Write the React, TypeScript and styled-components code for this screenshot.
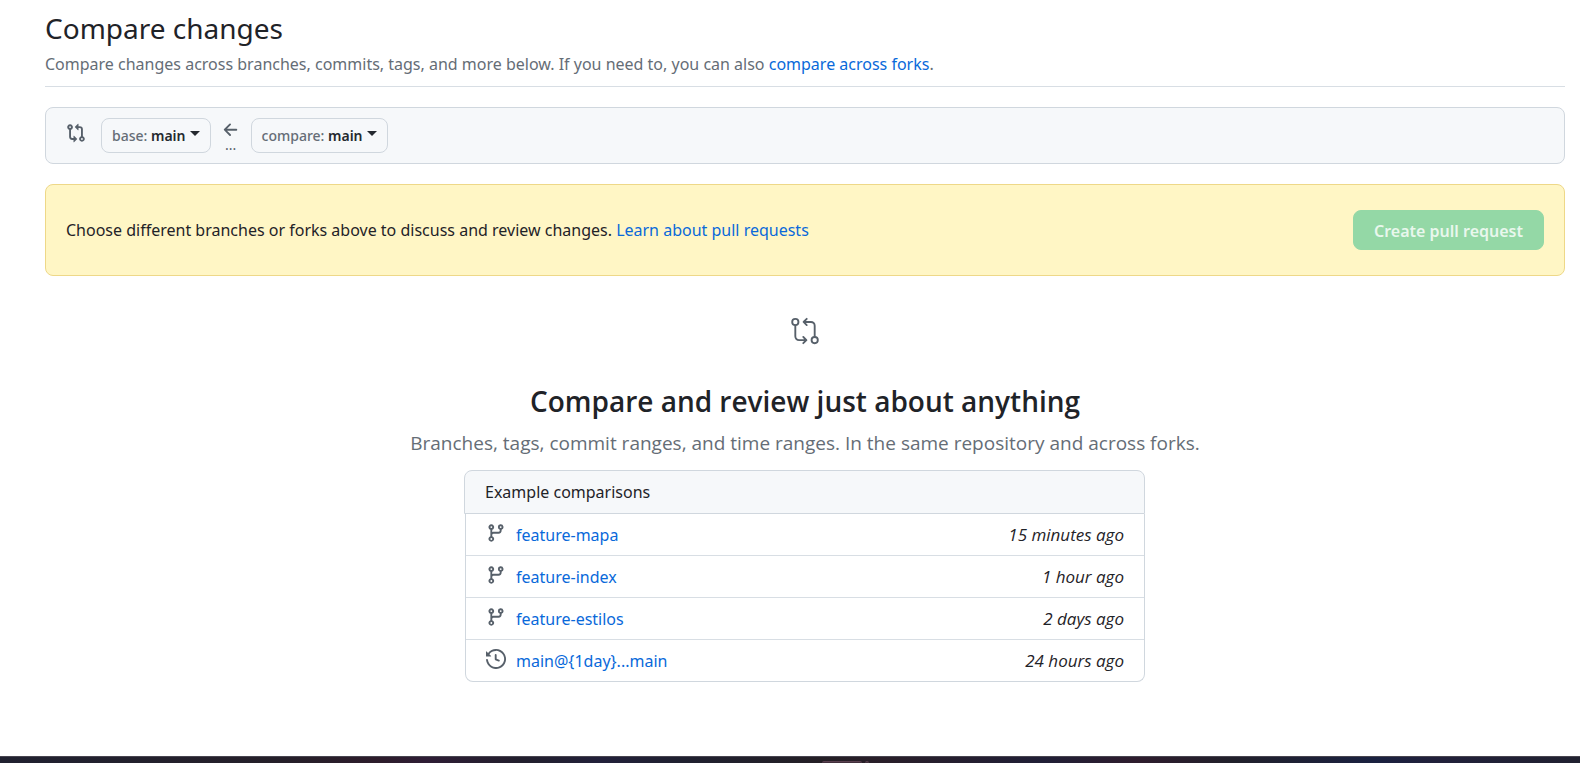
import React from "react";
import styled, { createGlobalStyle } from "styled-components";
import { GoGitCompare } from "react-icons/go";

const GlobalStyle = createGlobalStyle`
  *, *::before, *::after { box-sizing: border-box; }
  body {
    margin: 0;
    background: #ffffff;
    color: #1f2328;
    font-family: "Noto Sans", "Open Sans", sans-serif;
    font-size: 16px;
    line-height: 26px;
  }
  h1, h2, h3, p, ul { margin: 0; padding: 0; font-weight: 400; }
`;

const Page = styled.div`
  display: flex;
  flex-direction: column;
  min-height: 100vh;
`;

const Content = styled.main`
  flex: 1;
  padding: 8px 15px 0 45px;
`;

const Subhead = styled.header`
  padding-bottom: 9px;
  border-bottom: 1px solid #d8dee4;
`;

const Title = styled.h1`
  font-size: 28px;
  line-height: 40px;
`;

const Description = styled.p`
  margin-top: 3px;
  color: #656d76;
`;

const Link = styled.a`
  color: #0969da;
  text-decoration: none;
  &:hover { text-decoration: underline; }
`;

const RangeEditor = styled.div`
  display: flex;
  align-items: center;
  margin-top: 20px;
  padding: 10px 20px;
  border: 1px solid #d0d7de;
  border-radius: 8px;
  background: #f6f8fa;
`;

const Icon = styled.svg`
  display: block;
  flex: none;
  width: 20px;
  height: 20px;
  fill: #57606a;
`;

const RangeIcon = styled.span`
  margin-right: 15px;
  padding-bottom: 5px;
`;

const RefButton = styled.button`
  display: flex;
  align-items: center;
  height: 35px;
  padding: 0 10px;
  border: 1px solid #d0d7de;
  border-radius: 8px;
  background: #f6f8fa;
  color: #24292f;
  font: 600 14px/20px "Noto Sans", "Open Sans", sans-serif;
  white-space: pre;
`;

const RefLabel = styled.span`
  color: #656d76;
  font-weight: 500;
`;

const Caret = styled.span`
  margin: -4px 0 0 4px;
  border: 5px solid transparent;
  border-top-color: currentColor;
  border-bottom: 0;
`;

const Direction = styled.span`
  display: flex;
  flex-direction: column;
  align-items: center;
  width: 40px;
  padding-bottom: 2px;
  color: #57606a;
  font-size: 14px;
  line-height: 10px;
`;

const Banner = styled.section`
  display: flex;
  align-items: center;
  justify-content: space-between;
  gap: 20px;
  margin-top: 20px;
  padding: 25px 20px;
  border: 1px solid #eed888;
  border-radius: 8px;
  background: #fff6c5;
`;

const CreateButton = styled.button`
  height: 40px;
  padding: 1px 20px 0;
  border: 1px solid #94d8a6;
  border-radius: 8px;
  background: #94d8a6;
  color: #e9f7ed;
  font: 600 16px/26px "Noto Sans", "Open Sans", sans-serif;
`;

const Blankslate = styled.section`
  display: flex;
  flex-direction: column;
  align-items: center;
  padding: 40px 20px 70px;
  text-align: center;
`;

const BlankslateIcon = styled(GoGitCompare)`
  display: block;
  width: 30px;
  height: 30px;
  color: #57606a;
`;

const BlankslateTitle = styled.h2`
  margin-top: 35px;
  font-family: "Open Sans", "Noto Sans", sans-serif;
  font-size: 28px;
  font-weight: 600;
  line-height: 40px;
`;

const BlankslateText = styled.p`
  margin-top: 7px;
  color: #656d76;
  font-family: "Open Sans", "Noto Sans", sans-serif;
  font-size: 19px;
  line-height: 30px;
`;

const Box = styled.div`
  width: 100%;
  max-width: 680px;
  margin-top: 12px;
  text-align: left;
`;

const BoxHeader = styled.h3`
  margin-left: -1px;
  padding: 8px 20px;
  border: 1px solid #d0d7de;
  border-radius: 8px 8px 0 0;
  background: #f6f8fa;
  font-size: 16px;
  line-height: 26px;
`;

const List = styled.ul`
  list-style: none;
  border: 1px solid #d0d7de;
  border-top: 0;
  border-radius: 0 0 8px 8px;
`;

const Row = styled.li`
  display: flex;
  align-items: center;
  box-sizing: content-box;
  height: 40px;
  padding: 1px 20px 0;
  & + & { border-top: 1px solid #d8dee4; }
  ${Icon} { margin: 0 10px 4px 0; }
`;

const Age = styled.time`
  margin-left: auto;
  font-family: "Open Sans", "Noto Sans", sans-serif;
  font-size: 17px;
  font-style: italic;
`;

const Taskbar = styled.footer`
  display: flex;
  justify-content: center;
  align-items: flex-end;
  gap: 3px;
  height: 7px;
  padding-left: 110px;
  border-top: 1px solid #47444f;
  background: linear-gradient(90deg, #202130 0%, #251f29 18%, #2d1c2b 24%, #2e1d35 27%, #221f2d 33%, #22203a 38%, #1f2030 43%, #241f25 52%, #291e29 56%, #201f36 66%, #2e1c2d 72%, #21202b 78%, #1a2140 87%, #21203a 91%, #202130 100%);
`;

const TaskbarTab = styled.span<{ $width: number }>`
  width: ${(p) => p.$width}px;
  height: 2px;
  border-top: 1px solid #59404f;
  border-radius: 3px 3px 0 0;
  background: #42303c;
`;

const paths = {
  compare:
    "M9.573.677A.25.25 0 0 1 10 .854V2.5h1A2.5 2.5 0 0 1 13.5 5v5.628a2.251 2.251 0 1 1-1.5 0V5a1 1 0 0 0-1-1h-1v1.646a.25.25 0 0 1-.427.177L7.177 3.427a.25.25 0 0 1 0-.354ZM6 12v-1.646a.25.25 0 0 1 .427-.177l2.396 2.396a.25.25 0 0 1 0 .354l-2.396 2.396A.25.25 0 0 1 6 15.146V13.5H5A2.5 2.5 0 0 1 2.5 11V5.372a2.25 2.25 0 1 1 1.5 0V11a1 1 0 0 0 1 1Zm6.75 0a.75.75 0 1 0 0 1.5.75.75 0 0 0 0-1.5ZM4 3.25a.75.75 0 1 0-1.5 0 .75.75 0 0 0 1.5 0Z",
  branch:
    "M9.5 3.25a2.25 2.25 0 1 1 3 2.122V6A2.5 2.5 0 0 1 10 8.5H6a1 1 0 0 0-1 1v1.128a2.251 2.251 0 1 1-1.5 0V5.372a2.25 2.25 0 1 1 1.5 0v1.836A2.493 2.493 0 0 1 6 7h4a1 1 0 0 0 1-1v-.628A2.25 2.25 0 0 1 9.5 3.25Zm-6 0a.75.75 0 1 0 1.5 0 .75.75 0 0 0-1.5 0Zm8.25-.75a.75.75 0 1 0 0 1.5.75.75 0 0 0 0-1.5ZM4.25 12a.75.75 0 1 0 0 1.5.75.75 0 0 0 0-1.5Z",
  history:
    "m.427 1.927 1.215 1.215a8.002 8.002 0 1 1-1.6 5.685.75.75 0 1 1 1.493-.154 6.5 6.5 0 1 0 1.18-4.458l1.358 1.358A.25.25 0 0 1 3.896 6H.25A.25.25 0 0 1 0 5.75V2.104a.25.25 0 0 1 .427-.177ZM7.75 4a.75.75 0 0 1 .75.75v2.992l2.028.812a.75.75 0 0 1-.557 1.392l-2.5-1A.751.751 0 0 1 7 8.25v-3.5A.75.75 0 0 1 7.75 4Z",
  arrowLeft:
    "M7.78 12.53a.75.75 0 0 1-1.06 0L2.47 8.28a.75.75 0 0 1 0-1.06l4.25-4.25a.751.751 0 0 1 1.042.018.751.751 0 0 1 .018 1.042L4.81 7h7.44a.75.75 0 0 1 0 1.5H4.81l2.97 2.97a.75.75 0 0 1 0 1.06Z",
};

type IconName = keyof typeof paths;

const Octicon = ({ name }: { name: IconName }) => (
  <Icon viewBox="0 0 16 16" aria-hidden="true">
    <path d={paths[name]} />
  </Icon>
);

const RefPicker = ({ label, value }: { label: string; value: string }) => (
  <RefButton type="button" aria-haspopup="menu">
    <RefLabel>{label}: </RefLabel>
    <span>{value}</span>
    <Caret />
  </RefButton>
);

const comparisons: { icon: IconName; name: string; age: string }[] = [
  { icon: "branch", name: "feature-mapa", age: "15 minutes ago" },
  { icon: "branch", name: "feature-index", age: "1 hour ago" },
  { icon: "branch", name: "feature-estilos", age: "2 days ago" },
  { icon: "history", name: "main@{1day}...main", age: "24 hours ago" },
];

export default function App() {
  return (
    <Page>
      <GlobalStyle />
      <Content>
        <Subhead>
          <Title>Compare changes</Title>
          <Description>
            Compare changes across branches, commits, tags, and more below. If you need to, you can
            also <Link href="#forks">compare across forks</Link>.
          </Description>
        </Subhead>
        <RangeEditor>
          <RangeIcon>
            <Octicon name="compare" />
          </RangeIcon>
          <RefPicker label="base" value="main" />
          <Direction>
            <Octicon name="arrowLeft" />
            <span>...</span>
          </Direction>
          <RefPicker label="compare" value="main" />
        </RangeEditor>
        <Banner>
          <p>
            Choose different branches or forks above to discuss and review changes.{" "}
            <Link href="#learn">Learn about pull requests</Link>
          </p>
          <CreateButton type="button" disabled>
            Create pull request
          </CreateButton>
        </Banner>
        <Blankslate>
          <BlankslateIcon aria-hidden="true" />
          <BlankslateTitle>Compare and review just about anything</BlankslateTitle>
          <BlankslateText>
            Branches, tags, commit ranges, and time ranges. In the same repository and across forks.
          </BlankslateText>
          <Box>
            <BoxHeader>Example comparisons</BoxHeader>
            <List>
              {comparisons.map((item) => (
                <Row key={item.name}>
                  <Octicon name={item.icon} />
                  <Link href={`#${item.name}`}>{item.name}</Link>
                  <Age>{item.age}</Age>
                </Row>
              ))}
            </List>
          </Box>
        </Blankslate>
      </Content>
      <Taskbar>
        <TaskbarTab $width={40} />
        <TaskbarTab $width={4} />
      </Taskbar>
    </Page>
  );
}
